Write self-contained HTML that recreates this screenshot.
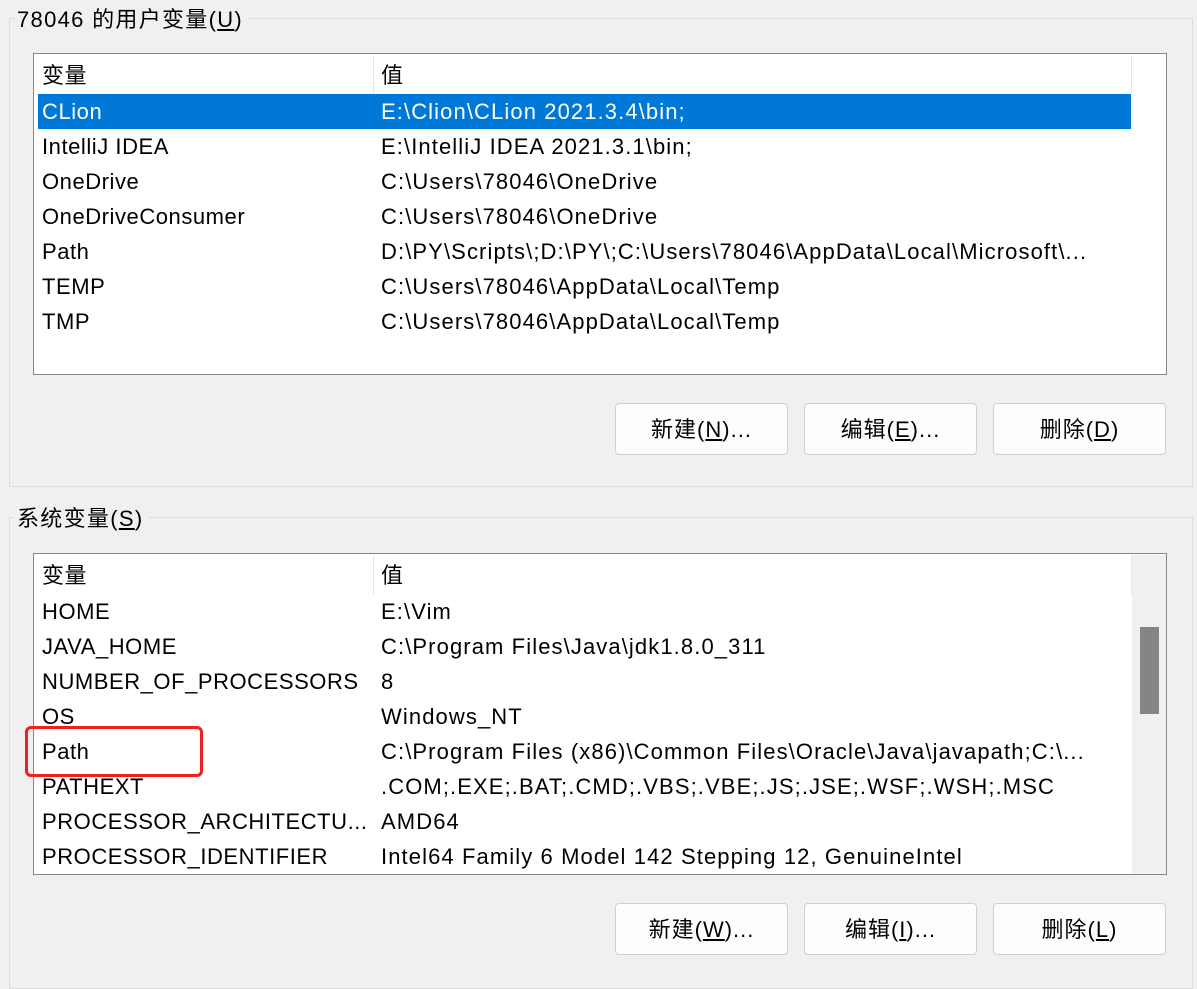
<!DOCTYPE html>
<html><head><meta charset="utf-8"><style>
body{margin:0;width:1197px;height:977px;background:#f0f0f0;position:relative;overflow:hidden;font-family:"Liberation Sans","Noto Sans CJK SC",sans-serif;font-size:22px;color:#000}
.a{position:absolute}
.grp{position:absolute;border:1px solid #dcdcdc}
.lbl{position:absolute;background:#f0f0f0;padding:0 6px 0 3px;line-height:30px;letter-spacing:1.3px}
.list{position:absolute;background:#fff;border:1px solid #828790;overflow:hidden}
.row{position:absolute;left:4px;height:35px;line-height:36px;white-space:nowrap}
.c1{position:absolute;left:4px;letter-spacing:0.55px}
.c2{position:absolute;left:343px;letter-spacing:1.1px}
.btn{position:absolute;width:171px;height:50px;background:#fdfdfd;border:1px solid #d0d0d0;border-radius:4px;text-align:center;line-height:52px;letter-spacing:1px}
u{text-decoration:underline}
</style></head><body>
<div class="grp" style="left:9px;top:18px;width:1182px;height:467px"></div>
<div class="lbl" style="left:14px;top:5px">78046 的用户变量(<u>U</u>)</div>
<div class="list" style="left:33px;top:53px;width:1132px;height:320px">
 <div class="a" style="left:339px;top:2px;width:1px;height:38px;background:#e5e5e5"></div>
 <div class="a" style="left:1097px;top:2px;width:1px;height:38px;background:#e5e5e5"></div>
 <div class="row" style="top:4px;width:1090px"><span class="c1">变量</span><span class="c2">值</span></div>
 <div class="row" style="top:40px;width:1093px;background:#0078d7;color:#fff"><span class="c1">CLion</span><span class="c2">E:\Clion\CLion 2021.3.4\bin;</span></div>
 <div class="row" style="top:75px"><span class="c1">IntelliJ IDEA</span><span class="c2">E:\IntelliJ IDEA 2021.3.1\bin;</span></div>
 <div class="row" style="top:110px"><span class="c1">OneDrive</span><span class="c2">C:\Users\78046\OneDrive</span></div>
 <div class="row" style="top:145px"><span class="c1">OneDriveConsumer</span><span class="c2">C:\Users\78046\OneDrive</span></div>
 <div class="row" style="top:180px"><span class="c1">Path</span><span class="c2">D:\PY\Scripts\;D:\PY\;C:\Users\78046\AppData\Local\Microsoft\...</span></div>
 <div class="row" style="top:215px"><span class="c1">TEMP</span><span class="c2">C:\Users\78046\AppData\Local\Temp</span></div>
 <div class="row" style="top:250px"><span class="c1">TMP</span><span class="c2">C:\Users\78046\AppData\Local\Temp</span></div>
</div>
<div class="btn" style="left:615px;top:403px">新建(<u>N</u>)...</div>
<div class="btn" style="left:804px;top:403px">编辑(<u>E</u>)...</div>
<div class="btn" style="left:993px;top:403px">删除(<u>D</u>)</div>

<div class="grp" style="left:9px;top:517px;width:1182px;height:470px"></div>
<div class="lbl" style="left:14px;top:504px">系统变量(<u>S</u>)</div>
<div class="list" style="left:33px;top:553px;width:1132px;height:320px">
 <div class="a" style="left:339px;top:2px;width:1px;height:38px;background:#e5e5e5"></div>
 <div class="a" style="left:1097px;top:2px;width:1px;height:38px;background:#e5e5e5"></div>
 <div class="a" style="left:1098px;top:1px;width:34px;height:320px;background:#f0f0f0"></div>
 <div class="a" style="left:1106px;top:73px;width:19px;height:87px;background:#858585"></div>
 <div class="row" style="top:4px"><span class="c1">变量</span><span class="c2">值</span></div>
 <div class="row" style="top:40px"><span class="c1">HOME</span><span class="c2">E:\Vim</span></div>
 <div class="row" style="top:75px"><span class="c1">JAVA_HOME</span><span class="c2">C:\Program Files\Java\jdk1.8.0_311</span></div>
 <div class="row" style="top:110px"><span class="c1">NUMBER_OF_PROCESSORS</span><span class="c2">8</span></div>
 <div class="row" style="top:145px"><span class="c1">OS</span><span class="c2">Windows_NT</span></div>
 <div class="row" style="top:180px"><span class="c1">Path</span><span class="c2">C:\Program Files (x86)\Common Files\Oracle\Java\javapath;C:\...</span></div>
 <div class="row" style="top:215px"><span class="c1">PATHEXT</span><span class="c2">.COM;.EXE;.BAT;.CMD;.VBS;.VBE;.JS;.JSE;.WSF;.WSH;.MSC</span></div>
 <div class="row" style="top:250px"><span class="c1">PROCESSOR_ARCHITECTU...</span><span class="c2">AMD64</span></div>
 <div class="row" style="top:285px"><span class="c1">PROCESSOR_IDENTIFIER</span><span class="c2">Intel64 Family 6 Model 142 Stepping 12, GenuineIntel</span></div>
</div>
<div class="a" style="left:25px;top:726px;width:172px;height:45px;border:3px solid #f02020;border-radius:6px"></div>
<div class="btn" style="left:615px;top:903px">新建(<u>W</u>)...</div>
<div class="btn" style="left:804px;top:903px">编辑(<u>I</u>)...</div>
<div class="btn" style="left:993px;top:903px">删除(<u>L</u>)</div>
</body></html>
